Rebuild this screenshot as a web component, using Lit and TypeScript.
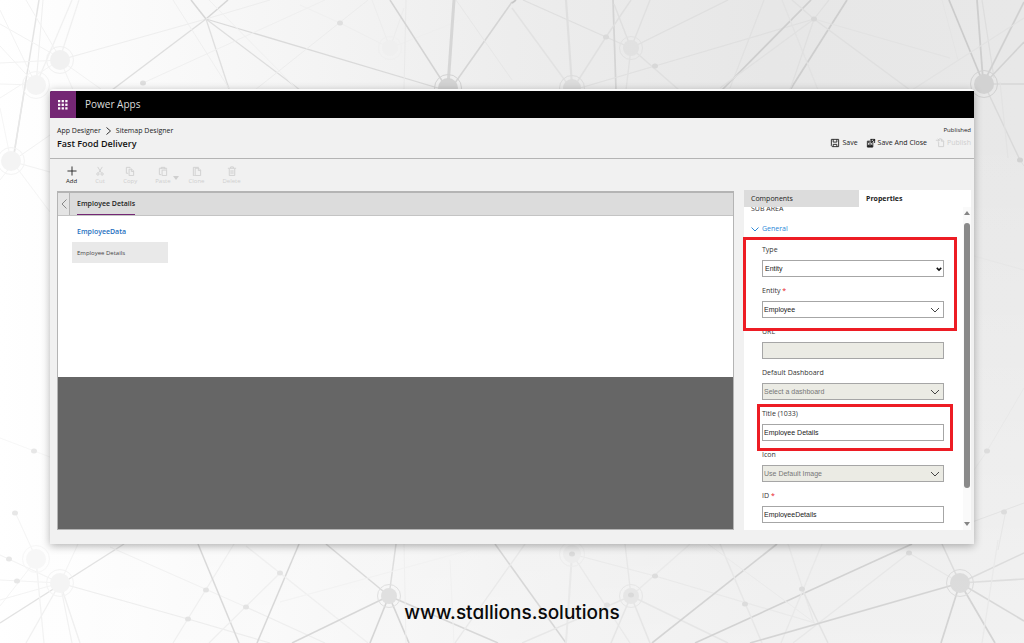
import { LitElement, html, css, svg } from "lit";
import { customElement } from "lit/decorators.js";
import { classMap } from "lit/directives/class-map.js";

type Line = [number, number, number, number, number, number];

/* x1, y1, x2, y2, grey level, stroke width */
const LINES: Line[] = [
  [39, 0, 14, 154, 222, 1.5], [43, 0, 36, 85, 236, 1], [72, 0, 36, 85, 238, 1.2], [79, 0, 60, 58, 238, 1.2],
  [26, 0, 60, 58, 240, 1], [0, 10, 36, 85, 241, 1], [0, 24, 60, 58, 240, 1], [0, 46, 36, 85, 241, 1],
  [0, 63, 60, 60, 240, 1], [0, 84, 36, 85, 241, 1], [0, 98, 60, 60, 242, 1], [60, 60, 206, 19, 236, 1],
  [60, 60, 105, 92, 241, 1], [60, 60, 74, 92, 241, 1], [206, 19, 191, 0, 207, 1.5], [206, 19, 228, 0, 207, 1.5],
  [206, 19, 112, 90, 216, 1.3], [206, 19, 229, 89, 218, 1.3], [206, 19, 300, 90, 216, 1.3], [206, 19, 448, 91, 212, 1.3],
  [206, 19, 270, 0, 236, 1], [143, 83, 325, 0, 238, 1], [173, 0, 230, 90, 238, 1], [209, 0, 298, 90, 239, 1],
  [255, 90, 368, 0, 235, 1], [340, 23, 390, 48, 238, 1], [300, 5, 340, 23, 240, 1], [390, 48, 372, 0, 236, 1],
  [390, 48, 404, 8, 236, 1], [390, 48, 512, 0, 238, 1], [406, 0, 404, 90, 232, 1], [390, 0, 448, 90, 205, 1.5],
  [454, 0, 448, 86, 208, 3], [512, 2, 450, 90, 207, 1.5], [456, 0, 512, 80, 229, 1], [512, 8, 572, 90, 224, 1.3],
  [512, 3, 516, 0, 190, 1.6], [523, 0, 606, 37, 220, 1.1], [606, 37, 631, 48, 221, 1.1], [566, 0, 572, 86, 221, 2.2],
  [613, 0, 616, 90, 207, 1.7], [631, 0, 606, 37, 221, 1.4], [606, 37, 572, 90, 222, 1.4], [614, 4, 631, 48, 221, 1.4],
  [650, 0, 631, 48, 222, 1.3], [728, 0, 631, 48, 221, 1.3], [631, 48, 679, 90, 222, 1.2], [631, 48, 626, 90, 223, 1.3],
  [655, 66, 814, 19, 222, 1.2], [580, 88, 655, 66, 222, 1.2], [764, 0, 730, 88, 223, 1.2], [811, 0, 722, 90, 200, 1.7],
  [847, 0, 790, 90, 200, 1.7], [782, 0, 818, 90, 225, 1.2], [792, 0, 814, 19, 222, 1.3], [829, 0, 814, 19, 222, 1.2],
  [814, 19, 790, 90, 222, 1.2], [814, 19, 910, 90, 222, 1.3], [814, 19, 720, 88, 223, 1.2], [814, 19, 950, 58, 226, 1],
  [949, 0, 982, 80, 197, 1.7], [977, 0, 983, 80, 200, 1.8], [982, 0, 994, 78, 219, 1.2], [1024, 2, 986, 78, 203, 1.7],
  [1024, 42, 988, 80, 206, 1.6], [990, 84, 1024, 84, 212, 1.4], [984, 84, 1020, 160, 214, 1.4], [1024, 18, 912, 90, 225, 1.1],
  [942, 0, 958, 60, 228, 1], [1000, 82, 1008, 158, 226, 1], [974, 256, 1024, 270, 230, 1],
  [1020, 160, 1024, 166, 220, 1], [987, 451, 1024, 388, 232, 1], [974, 470, 987, 451, 232, 1], [964, 525, 1024, 503, 225, 1],
  [1006, 510, 998, 550, 229, 1], [0, 108, 11, 161, 244, 1], [26, 80, 14, 154, 226, 1.4], [14, 160, 50, 135, 240, 1],
  [14, 162, 50, 172, 240, 1], [14, 164, 50, 212, 243, 1], [0, 180, 14, 162, 243, 1], [0, 438, 50, 457, 246, 1],
  [15, 512, 36, 558, 243, 1],
  [0, 623, 124, 544, 220, 1.4], [0, 580, 60, 583, 241, 1], [0, 606, 36, 560, 243, 1], [0, 600, 60, 583, 241, 1],
  [0, 555, 60, 583, 240, 1], [36, 560, 44, 643, 240, 1.2], [26, 643, 60, 583, 238, 1.2], [60, 583, 80, 643, 237, 1.3],
  [60, 583, 72, 643, 239, 1.2], [60, 583, 78, 544, 242, 1], [60, 583, 188, 619, 235, 1.2], [188, 619, 270, 643, 235, 1.2],
  [110, 547, 246, 607, 240, 1], [246, 607, 325, 643, 236, 1.2], [173, 643, 234, 544, 238, 1.2], [198, 544, 239, 643, 210, 1.5],
  [299, 544, 257, 643, 208, 1.5], [209, 643, 280, 573, 237, 1.2], [246, 546, 368, 643, 238, 1.2], [326, 544, 389, 596, 212, 1.5],
  [396, 544, 389, 596, 216, 1.5], [389, 596, 292, 643, 208, 1.5], [389, 596, 370, 643, 205, 1.6], [389, 596, 409, 643, 205, 1.6],
  [389, 596, 498, 643, 209, 1.5], [404, 544, 406, 643, 238, 1], [450, 560, 454, 643, 240, 1], [495, 544, 566, 643, 209, 1.5],
  [455, 643, 525, 544, 231, 1.3], [280, 602, 470, 550, 242, 1], [572, 554, 566, 643, 231, 2], [572, 554, 630, 643, 232, 1.3],
  [572, 554, 655, 576, 233, 1.2], [655, 576, 815, 623, 232, 1.2], [631, 596, 690, 544, 232, 1.2], [625, 544, 631, 596, 229, 1.3],
  [631, 596, 522, 643, 229, 1.4], [631, 596, 611, 643, 227, 1.5], [631, 596, 650, 643, 227, 1.5], [631, 596, 728, 643, 228, 1.5],
  [777, 544, 652, 643, 205, 1.6], [912, 544, 695, 643, 203, 1.6], [720, 544, 762, 643, 229, 1.4], [788, 544, 814, 623, 231, 1.2],
  [822, 544, 781, 643, 231, 1.3], [802, 589, 828, 643, 224, 1.4], [708, 544, 815, 623, 233, 1], [909, 553, 793, 643, 230, 1.2],
  [960, 583, 750, 643, 206, 1.6], [942, 544, 960, 583, 216, 1.5], [960, 583, 1024, 553, 216, 1.4], [960, 583, 1024, 579, 218, 1.7],
  [960, 583, 1024, 621, 211, 1.6], [960, 583, 941, 643, 205, 1.7], [960, 583, 995, 643, 205, 1.7], [909, 553, 960, 583, 230, 1.1],
  [982, 643, 998, 540, 232, 1.2],
];

/* centre x, centre y, radius, grey level */
const HUBS: number[][] = [
  [60, 60, 10, 239], [36, 85, 10, 242], [11, 161, 10, 242], [448, 88, 10, 205], [390, 48, 8, 239], [572, 88, 9, 217],
  [631, 48, 8, 224], [984, 84, 10, 205], [36, 559, 10, 246], [60, 583, 10, 242], [389, 596, 8, 219], [572, 554, 9, 236],
  [631, 596, 8, 228], [960, 583, 10, 215],
];

const DOTS: number[][] = [
  [143, 83, 216], [340, 23, 219], [606, 37, 214], [655, 66, 212], [814, 19, 212], [1020, 160, 205], [987, 451, 216],
  [1004, 512, 216], [34, 451, 226], [15, 513, 226], [9, 559, 226], [17, 581, 226], [206, 590, 222], [188, 619, 222],
  [246, 607, 222], [280, 573, 222], [572, 554, 214], [655, 576, 216], [631, 595, 212], [607, 605, 222], [745, 604, 216],
  [802, 589, 216], [909, 553, 214],
];

const grey = (v: number) => `rgb(${v},${v},${v})`;

@customElement("network-backdrop")
class NetworkBackdrop extends LitElement {
  static styles = css`
    :host { display: block; }
    .art { display: block; width: 100%; height: 100%; }
    .web { opacity: 0.8; }
  `;
  render() {
    return html`<svg class="art" viewBox="0 0 1024 643" preserveAspectRatio="xMidYMid slice" aria-hidden="true">
      <defs>
        <linearGradient id="across"><stop offset="0" stop-color="#fff"/><stop offset=".2" stop-color="#f8f8f8"/><stop offset=".5" stop-color="#ededed"/><stop offset=".75" stop-color="#e7e7e7"/><stop offset="1" stop-color="#e8e8e8"/></linearGradient>
        <linearGradient id="down" x2="0" y2="1"><stop offset=".2" stop-color="#fff" stop-opacity="0"/><stop offset="1" stop-color="#fff" stop-opacity=".42"/></linearGradient>
      </defs>
      <rect width="1024" height="643" fill="url(#across)"/>
      <rect width="1024" height="643" fill="url(#down)"/>
      <g class="web">
        ${LINES.map(([a, b, c, d, g, w]) => svg`<line x1=${a} y1=${b} x2=${c} y2=${d} stroke=${grey(g)} stroke-width=${w}/>`)}
        ${HUBS.map(([x, y, r, g]) => svg`<circle cx=${x} cy=${y} r=${r} fill=${grey(g)}/><circle cx=${x} cy=${y} r=${r + 3.5} fill="none" stroke=${grey(g)}/>`)}
        ${DOTS.map(([x, y, g]) => svg`<ellipse cx=${x} cy=${y} rx="3" ry="2.5" fill=${grey(g)}/>`)}
      </g>
    </svg>`;
  }
}

const stroke = (d: string) => svg`<path d=${d} fill="none" stroke="currentColor" stroke-width="1"/>`;

const ICONS: Record<string, unknown> = {
  Add: stroke("M5.500 .5v10M.5 5.500h10"),
  Cut: svg`${stroke("M3 1l4 6.5M8 1L4 7.5")}<circle cx="3.2" cy="8.8" r="1.3" fill="none" stroke="currentColor"/><circle cx="7.8" cy="8.8" r="1.3" fill="none" stroke="currentColor"/>`,
  Copy: stroke("M3.5 8h-2V1.500h4l1 1M4.500 3.500h3l2 2v5h-5zM7 3.500v2.500h2.500"),
  Paste: stroke("M3.500 9.500h-2v-7h8v1.500M3.500 3.500v-2h4v2M4.500 4.500h5v6h-5z"),
  Clone: stroke("M3 10.500h-1.500v-9h6M3.500 2.500h4l2 2v6h-6zM7 2.500v2.500h2.500"),
  Delete: stroke("M1 2.500h9M4 2.500v-1.500h3v1.500M2.500 3v7.500h6V3M4.500 4.500v4.500M6.500 4.500v4.500"),
  Save: stroke("M1.500 1.500h8v8h-7l-1-1zM3.500 1.500v3h4v-3M3.500 9.500v-2.500h4v2.500"),
  SaveClose: svg`${stroke("M1.500 3.500h6v6.500h-6zM3 3.500v2h3v-2M3 10v-2.500h3v2.500M5 1.500h4.500v4M9.500 1.500l-3 3")}<path d="M1.500 8h6v2h-6zM5 1h1.500v2H5zM8.500 1H10v2H8.500z" fill="currentColor"/>`,
  Publish: stroke("M4 4.500v5h5.500v-6l-2.500-2.500H4.500M7 1v2.500h2.500M1 2.500h3.500M3 1l2 1.500-2 1.500"),
};

const icon = (name: string) => html`<svg class="icon" viewBox="0 0 11 11" aria-hidden="true">${ICONS[name]}</svg>`;

interface Field {
  id: string;
  label: string;
  kind: "native" | "combo" | "text";
  value: string;
  required?: boolean;
  disabled?: boolean;
}

const TARGET: Field[] = [
  { id: "type", label: "Type", kind: "native", value: "Entity" },
  { id: "entity", label: "Entity", kind: "combo", value: "Employee", required: true },
];
const LINK: Field[] = [
  { id: "url", label: "URL", kind: "text", value: "", disabled: true },
  { id: "dashboard", label: "Default Dashboard", kind: "combo", value: "Select a dashboard", disabled: true },
];
const TITLE: Field[] = [{ id: "title", label: "Title (1033)", kind: "text", value: "Employee Details" }];
const REST: Field[] = [
  { id: "icon", label: "Icon", kind: "combo", value: "Use Default Image", disabled: true },
  { id: "ident", label: "ID", kind: "text", value: "EmployeeDetails", required: true },
];

@customElement("properties-panel")
class PropertiesPanel extends LitElement {
  static styles = css`
    :host { display: flex; flex-direction: column; background: #fff; color: #333; }
    button, select, input { font: inherit; color: inherit; margin: 0; border-radius: 0; box-sizing: border-box; }
    .tabs { display: grid; grid-template-columns: 115fr 112fr; height: 17px; border-bottom: 1px solid #e6e6e6; box-sizing: border-box; }
    .tab { border: 0; padding: 0 7px; text-align: left; background: #fff; color: #222; line-height: 16px; }
    .idle { background: #dcdcdc; height: 17px; }
    .active { font-weight: 700; }
    .body { display: grid; grid-template-columns: 1fr 8px; flex: 1; }
    .scroll { overflow-x: visible; overflow-y: clip; padding: 0 19px 7px 18px; }
    .kind { margin: -5px -11px 6px; font-size: 7px; line-height: 14px; font-weight: 400; }
    .section { display: flex; align-items: center; gap: 3px; margin: 0 0 6px -11px; padding: 0; border: 0; background: none; color: #2b88d8; line-height: 14px; }
    .chevron { width: 8px; height: 8px; fill: none; stroke: currentColor; }
    .group { position: relative; }
    .marked::after { content: ""; position: absolute; border: 3px solid #ed1c24; pointer-events: none; z-index: 1; }
    .wide::after { inset: -5px -13px -7px -19px; }
    .snug::after { inset: -2px -9px -4px -5px; }
    .field { display: grid; row-gap: 2px; padding-bottom: 6px; }
    .group.last .field:last-child { padding-bottom: 0; }
    .label { line-height: 16px; }
    .star { color: #e81123; }
    .box { display: grid; grid-template-columns: 1fr; align-items: center; }
    .box > * { grid-area: 1 / 1; }
    .control { width: 100%; height: 17px; appearance: none; border: 1px solid #a6a6a6; background: #fff; padding: 0 1px; font-family: "Liberation Sans", Arial, sans-serif; font-size: 7px; line-height: 15px; color: #222; opacity: 1; }
    .native { padding-left: 2px; }
    .control:disabled { background: #ebebe4; color: #777; }
    .arrow { justify-self: end; width: 10px; height: 8px; margin-right: 4px; fill: none; stroke: #444; pointer-events: none; }
    .arrow.tight { width: 6px; margin-right: 2px; stroke: #111; stroke-width: 2; }
    .bar { display: flex; flex-direction: column; align-items: center; background: #fafafa; padding: 4px 0; }
    .tip { width: 6px; height: 4px; fill: #858585; }
    .thumb { flex: 265; width: 6px; margin-top: 8px; border-radius: 3px; background: #8a8a8a; }
    .rest { flex: 34; }
  `;

  control(f: Field) {
    if (f.kind === "text")
      return html`<input class="control" id=${f.id} type="text" .value=${f.value} ?disabled=${f.disabled} />`;
    const native = f.kind === "native";
    return html`<select class=${classMap({ control: true, native })} id=${f.id} ?disabled=${f.disabled}><option>${f.value}</option></select>
      ${native
        ? html`<svg class="arrow tight" viewBox="0 0 8 8" aria-hidden="true"><path d="M1 2.500l3 3 3-3"/></svg>`
        : html`<svg class="arrow" viewBox="0 0 10 8" aria-hidden="true"><path d="M1 2l4 4 4-4"/></svg>`}`;
  }

  group(fields: Field[], extra = "") {
    return html`<div class="group ${extra}">${fields.map(
      (f) => html`<div class="field">
        <label class="label" for=${f.id}>${f.label}${f.required ? html` <span class="star">*</span>` : ""}</label>
        <div class="box">${this.control(f)}</div>
      </div>`
    )}</div>`;
  }

  render() {
    return html`
      <div class="tabs"><button class="tab idle">Components</button><button class="tab active">Properties</button></div>
      <div class="body">
        <div class="scroll">
          <h2 class="kind">SUB AREA</h2>
          <button class="section"><svg class="chevron" viewBox="0 0 8 8" aria-hidden="true"><path d="M.5 2.500L4 6l3.500-3.500"/></svg>General</button>
          ${this.group(TARGET, "marked wide")}
          ${this.group(LINK)}
          ${this.group(TITLE, "marked snug")}
          ${this.group(REST, "last")}
        </div>
        <div class="bar">
          <svg class="tip" viewBox="0 0 6 4" aria-hidden="true"><path d="M0 4l3-4 3 4z"/></svg>
          <div class="thumb"></div><div class="rest"></div>
          <svg class="tip" viewBox="0 0 6 4" aria-hidden="true"><path d="M0 0l3 4 3-4z"/></svg>
        </div>
      </div>`;
  }
}

@customElement("app-root")
class AppRoot extends LitElement {
  static styles = css`
    :host { display: block; font-family: "Open Sans", "Noto Sans", sans-serif; font-size: 7px; color: #222; }
    button { font: inherit; color: inherit; margin: 0; padding: 0; border: 0; background: none; }
    a { color: inherit; text-decoration: none; }
    .page { position: relative; min-height: 100vh; box-sizing: border-box; padding: 89px 50px 0; display: flex; flex-direction: column; overflow: hidden; }
    .backdrop { position: absolute; inset: 0; }
    .window { position: relative; background: #f1f1f1; border-top: 2px solid #fafafa; border-radius: 3px 3px 0 0; box-shadow: 0 2px 9px rgba(0, 0, 0, 0.3); }
    .top { display: flex; align-items: center; height: 27px; background: #000; border-radius: 2px 0 0 0; overflow: hidden; }
    .waffle { width: 26px; height: 27px; background: #742774; display: grid; place-items: center; }
    .dots { width: 10px; height: 10px; fill: #fff; }
    .brand { margin-left: 9px; color: #ddd; font-size: 10px; line-height: 17px; }
    .head { display: flex; justify-content: space-between; height: 41px; box-sizing: border-box; padding: 7px 3px 0 7px; border-bottom: 1px solid #b4b4b4; }
    .crumbs { display: flex; align-items: center; gap: 5px; line-height: 12px; }
    .sep { width: 5px; height: 8px; fill: none; stroke: #333; }
    .name { margin: 0; font-size: 9px; line-height: 14px; font-weight: 600; color: #111; }
    .side { display: flex; flex-direction: column; align-items: flex-end; }
    .state { font-size: 6px; line-height: 10px; }
    .actions { display: flex; gap: 8px; padding-top: 2px; }
    .action { display: flex; align-items: center; gap: 2px; line-height: 11px; }
    .action .icon { width: 10px; height: 10px; }
    .off { color: #cfcfcf; }
    .work { display: grid; grid-template-columns: minmax(0, 1fr) 227px; column-gap: 10px; padding: 0 3px 14px 7px; }
    .left { display: flex; flex-direction: column; }
    .tools { display: flex; align-items: flex-start; height: 32px; box-sizing: border-box; padding: 7px 0 0 9px; gap: 18px; font-size: 6px; }
    .tool { display: grid; justify-items: center; line-height: 8px; row-gap: 1px; }
    .tool .icon { width: 10px; height: 10px; }
    .drop { display: flex; align-items: flex-end; gap: 2px; margin-right: -8px; }
    .caret { width: 6px; height: 8px; fill: currentColor; }
    .canvas { flex: 1; display: flex; flex-direction: column; background: #666; border: 1px solid #b4b4b4; border-top-width: 2px; box-sizing: border-box; }
    .areas { display: flex; height: 23px; background: #dcdcdc; border-bottom: 1px solid #c4c4c4; box-sizing: border-box; }
    .back { width: 12px; border: 1px solid #b4b4b4; border-width: 0 1px 0 0; background: #e4e4e4; display: grid; place-items: center; }
    .back svg { width: 6px; height: 10px; fill: none; stroke: #888; }
    .area { margin-left: 7px; font-weight: 600; border-bottom: 1px solid #742774; height: 22px; line-height: 20px; box-sizing: border-box; }
    .sheet { background: #fff; height: 161px; box-sizing: border-box; padding: 8px 14px; display: flex; flex-direction: column; align-items: flex-start; gap: 2px; }
    .group { padding-left: 5px; line-height: 16px; font-weight: 600; color: #1e6fc0; }
    .item { width: 96px; height: 21px; padding-left: 5px; background: #e9e9e9; text-align: left; font-size: 6px; color: #444; }
    .panel { margin-top: 31px; }
    .foot { position: relative; flex: 1; display: grid; place-items: center; padding-top: 38px; box-sizing: border-box; }
    .site { font: 500 19px/28px "Inter", sans-serif; font-feature-settings: "cv11"; color: #0a0a0a; }
  `;

  tool(label: string) {
    const off = label !== "Add";
    const tool = html`<button class=${classMap({ tool: true, off })} ?disabled=${off}>${icon(label)}<span>${label}</span></button>`;
    return label === "Paste"
      ? html`<div class="drop off">${tool}<button class="off" aria-label="Paste options" disabled><svg class="caret" viewBox="0 0 6 8" aria-hidden="true"><path d="M0 1h6L3 5z"/></svg></button></div>`
      : tool;
  }

  render() {
    const cells = [0, 4, 8];
    return html`<div class="page">
      <network-backdrop class="backdrop"></network-backdrop>
      <main class="window">
        <header class="top">
          <button class="waffle" aria-label="Apps"><svg class="dots" viewBox="0 0 11 11">${cells.map((y) =>
            cells.map((x) => svg`<rect x=${x} y=${y} width="2.500" height="2.500"/>`))}</svg></button>
          <span class="brand">Power Apps</span>
        </header>
        <div class="head">
          <div>
            <nav class="crumbs"><a href="#">App Designer</a><svg class="sep" viewBox="0 0 5 8" aria-hidden="true"><path d="M.5 0.500L4.500 4l-4 3.500"/></svg><a href="#">Sitemap Designer</a></nav>
            <h1 class="name">Fast Food Delivery</h1>
          </div>
          <div class="side">
            <span class="state">Published</span>
            <div class="actions">
              <button class="action">${icon("Save")}Save</button>
              <button class="action">${icon("SaveClose")}Save And Close</button>
              <button class="action off" disabled>${icon("Publish")}Publish</button>
            </div>
          </div>
        </div>
        <div class="work">
          <div class="left">
            <div class="tools">${["Add", "Cut", "Copy", "Paste", "Clone", "Delete"].map((t) => this.tool(t))}</div>
            <section class="canvas">
              <div class="areas">
                <button class="back" aria-label="Previous area"><svg viewBox="0 0 6 10"><path d="M5.500 .5L1 5l4.500 4.500"/></svg></button>
                <button class="area">Employee Details</button>
              </div>
              <div class="sheet">
                <button class="group">EmployeeData</button>
                <button class="item">Employee Details</button>
              </div>
            </section>
          </div>
          <properties-panel class="panel"></properties-panel>
        </div>
      </main>
      <footer class="foot"><a class="site" href="#">www.stallions.solutions</a></footer>
    </div>`;
  }
}
